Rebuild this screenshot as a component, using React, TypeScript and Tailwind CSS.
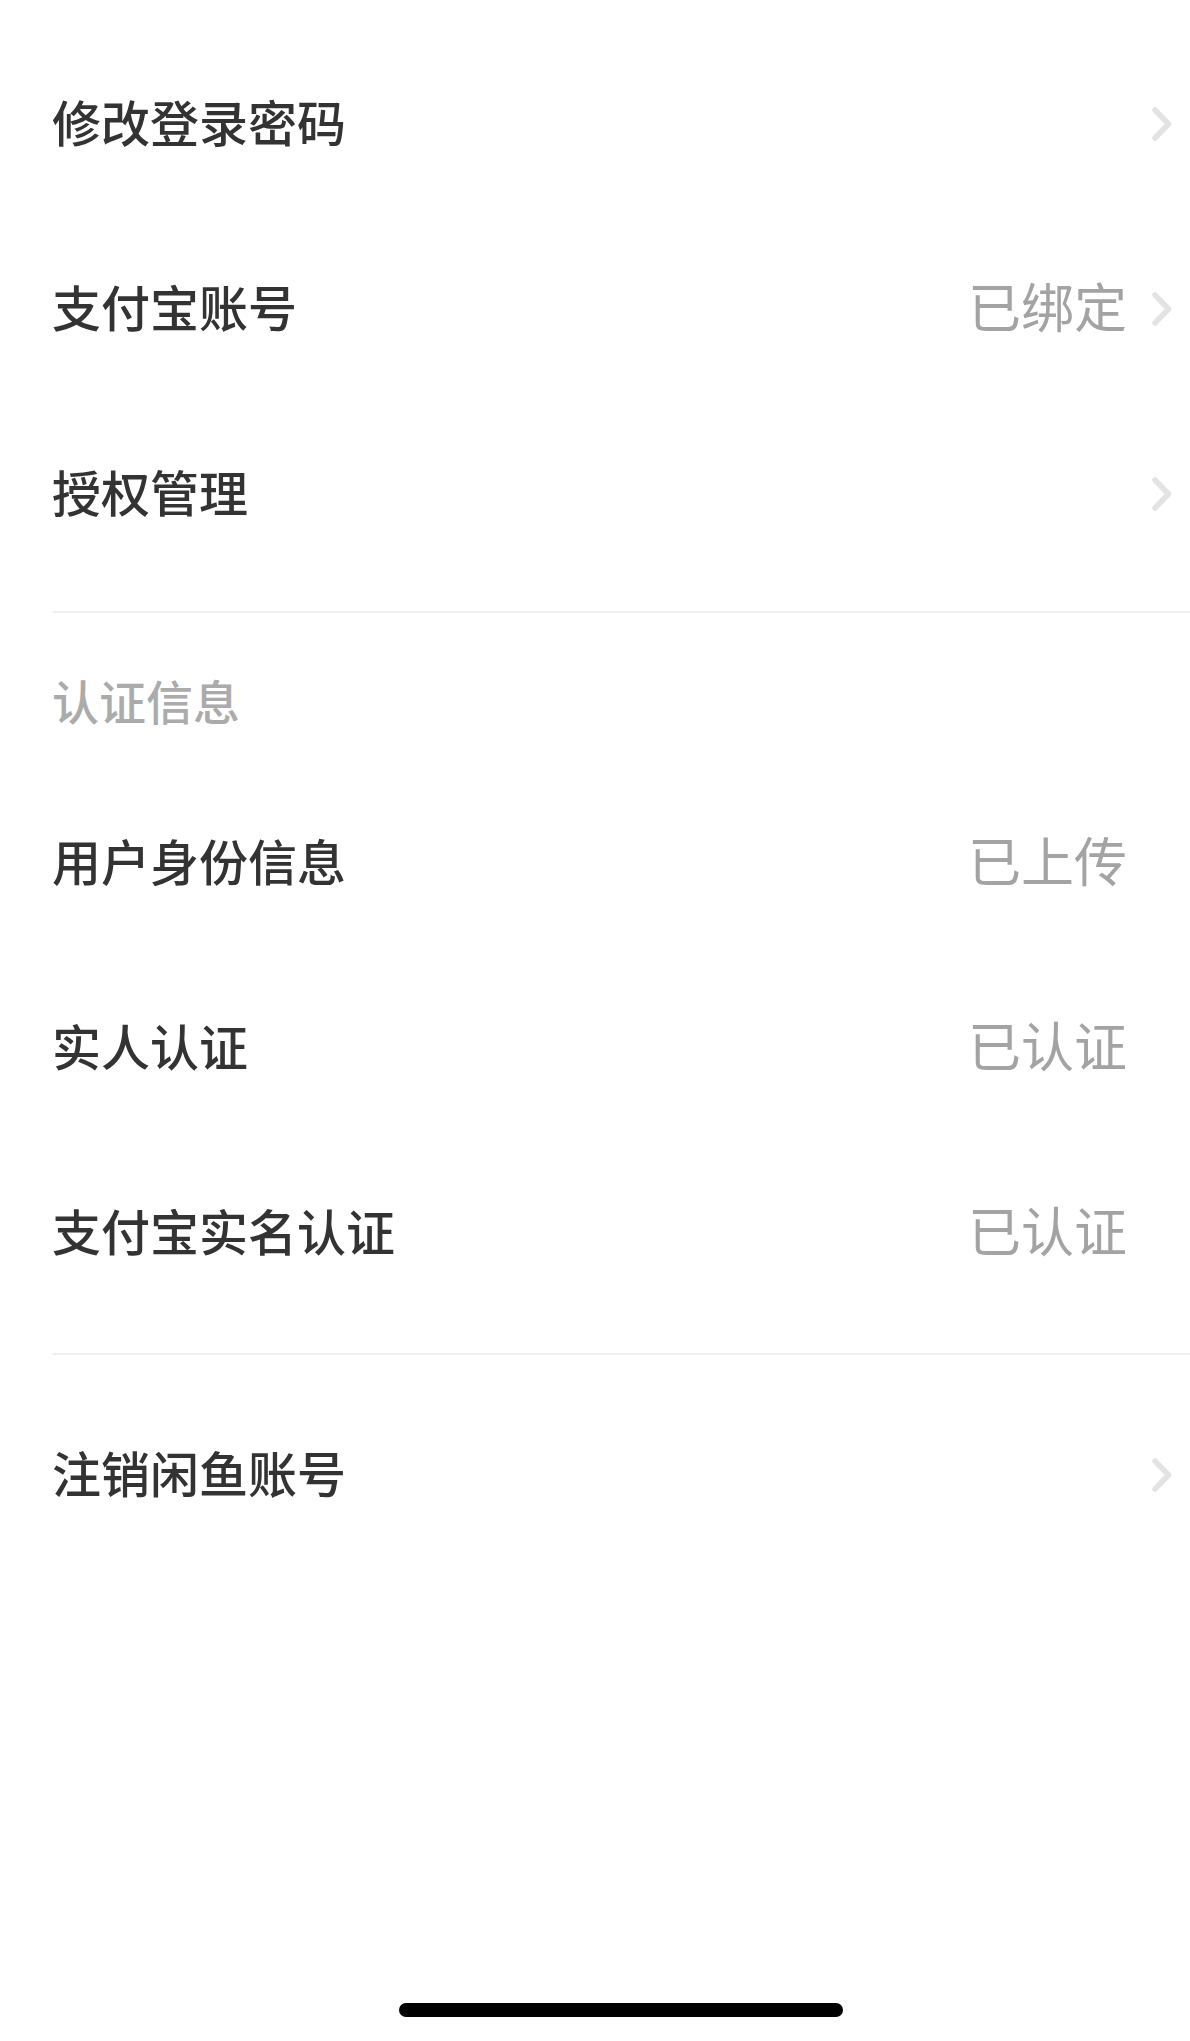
import React from "react";

const font = { fontFamily: '"Noto Sans CJK SC", "Noto Sans", sans-serif' };

function Chevron({ show }: { show: boolean }) {
  return (
    <div className="w-[20px] h-[34px] flex items-center justify-center">
      {show && (
        <svg width="20" height="34" viewBox="0 0 20 34" fill="none">
          <polyline
            points="3,3 16.5,17 3,31"
            stroke="#e3e3e3"
            strokeWidth="5.5"
            strokeLinecap="round"
            strokeLinejoin="round"
          />
        </svg>
      )}
    </div>
  );
}

function Row({ label, value, arrow }: { label: string; value?: string; arrow: boolean }) {
  return (
    <div className="h-[185px] flex items-center pl-[52px] pr-[18px]">
      <div className="flex-1 text-[49px] leading-[49px] font-medium text-[#333333] pb-[7px]">{label}</div>
      {value && (
        <div className="text-[53px] leading-[53px] text-[#a3a3a3] mr-[25px] pb-[7px]">{value}</div>
      )}
      {!value && <div className="mr-[25px]" />}
      <Chevron show={arrow} />
    </div>
  );
}

export default function App() {
  return (
    <div className="w-[1190px] h-[2041px] bg-white flex flex-col" style={font}>
      <div className="pt-[31px]">
        <Row label="修改登录密码" arrow />
        <Row label="支付宝账号" value="已绑定" arrow />
        <Row label="授权管理" arrow />
      </div>
      <div className="mt-[25px] ml-[53px] h-[2px] bg-[#efefef]" />
      <div className="pl-[52px] pt-[63px] pb-[46px] text-[47px] leading-[48px] font-medium text-[#ababab]">
        认证信息
      </div>
      <div>
        <Row label="用户身份信息" value="已上传" arrow={false} />
        <Row label="实人认证" value="已认证" arrow={false} />
        <Row label="支付宝实名认证" value="已认证" arrow={false} />
      </div>
      <div className="mt-[28px] ml-[53px] h-[2px] bg-[#efefef]" />
      <div className="pt-[27px]">
        <Row label="注销闲鱼账号" arrow />
      </div>
      <div className="flex-1" />
      <div className="pb-[24px] pl-[399px]">
        <div className="w-[444px] h-[14px] rounded-full bg-black" />
      </div>
    </div>
  );
}
